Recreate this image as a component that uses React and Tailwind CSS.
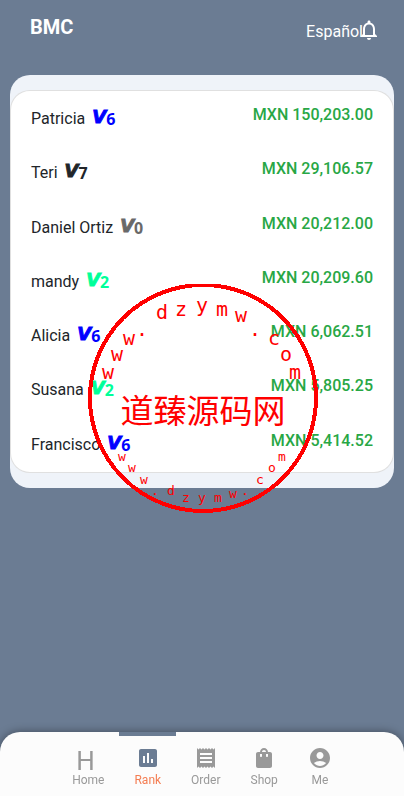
import React from "react";
import { MdNotificationsNone, MdPoll, MdReceipt, MdShoppingBag, MdAccountCircle } from "react-icons/md";

const rows = [
  { name: "Patricia", level: 6, color: "text-[#0000ff]", amount: "150,203.00" },
  { name: "Teri", level: 7, color: "text-[#212529]", amount: "29,106.57" },
  { name: "Daniel Ortiz", level: 0, color: "text-[#696969]", amount: "20,212.00" },
  { name: "mandy", level: 2, color: "text-[#00ff99]", amount: "20,209.60" },
  { name: "Alicia", level: 6, color: "text-[#0000ff]", amount: "6,062.51" },
  { name: "Susana", level: 2, color: "text-[#00ff99]", amount: "5,805.25" },
  { name: "Francisco", level: 6, color: "text-[#0000ff]", amount: "5,414.52" },
];

const tabs = [
  { label: "Home" },
  { label: "Rank", icon: MdPoll, active: true },
  { label: "Order", icon: MdReceipt },
  { label: "Shop", icon: MdShoppingBag },
  { label: "Me", icon: MdAccountCircle },
];

// [char, x, baseline] on a 230 x 230 stamp
const upperArc = [
  ["w", 20, 95], ["w", 29, 77], ["w", 41, 61], [".", 54, 52], ["d", 74, 35], ["z", 93, 32], ["y", 114, 28],
  ["m", 134, 32], ["w", 153, 38], [".", 167, 52], ["c", 186, 61], ["o", 198, 77], ["m", 207, 95],
];
const lowerArc = [
  ["w", 34, 177], ["w", 44, 188], ["w", 56, 200], [".", 67, 211], ["d", 83, 211], ["z", 98, 218], ["y", 114, 218],
  ["m", 130, 218], ["w", 145, 214], [".", 157, 211], ["c", 172, 200], ["o", 184, 188], ["m", 194, 177],
];

const Stamp = () => {
  return (
    <svg
      className="pointer-events-none absolute left-1/2 top-[284px] ml-px -translate-x-1/2 font-['DejaVu_Sans_Mono',monospace]"
      width="230"
      height="230"
      viewBox="0 0 230 230"
      fill="#ff0000"
      textAnchor="middle"
    >
      <circle cx="115" cy="114" r="113" fill="none" stroke="#ff0000" strokeWidth="4" shapeRendering="crispEdges" />
      {upperArc.map(([char, x, y]) => (
        <text key={x} x={x} y={y} fontSize="20">{char}</text>
      ))}
      <text x="115" y="139" fontSize="33" className="font-['Noto_Sans_CJK_SC',sans-serif]">道臻源码网</text>
      {lowerArc.map(([char, x, y]) => (
        <text key={x} x={x} y={y} fontSize="13">{char}</text>
      ))}
    </svg>
  );
};

const Level = ({ value, color }) => {
  return (
    <span className={`ml-[7px] flex items-start font-bold ${color}`}>
      <span className="font-['DejaVu_Sans',sans-serif] text-lg leading-5 italic [-webkit-text-stroke:1px]">V</span>
      <span className="font-['Noto_Sans',sans-serif] leading-6">{value}</span>
    </span>
  );
};

const App = () => {
  return (
    <div className="relative flex min-h-screen flex-col bg-[#6b7c93] font-[Roboto,sans-serif] text-base text-[#212529]">
      <header className="flex items-start justify-between pl-[30px] pr-[23px] pt-[15px] text-white">
        <h1 className="text-xl font-bold leading-6">BMC</h1>
        <div className="flex pt-[3px]">
          <a href="#language" className="-mr-[6px] pt-0.5 leading-6">Español</a>
          <button type="button" aria-label="Notifications" className="h-6">
            <MdNotificationsNone size={24} />
          </button>
        </div>
      </header>

      <main className="mx-[10px] mt-[31px] mb-20 rounded-[20px] bg-[#eff3f9] py-[15px]">
        <ul className="grid min-h-[383px] auto-rows-fr rounded-[20px] border border-black/12 bg-white px-5 pb-px">
          {rows.map((row) => (
            <li key={row.name} className="flex items-start justify-between">
              <div className="flex pt-4 leading-6">
                <span>{row.name}</span>
                <Level value={row.level} color={row.color} />
              </div>
              <span className="pt-3 font-medium leading-6 text-[#28a745]">MXN {row.amount}</span>
            </li>
          ))}
        </ul>
      </main>

      <nav className="fixed inset-x-0 bottom-0 flex h-16 justify-center rounded-t-[20px] bg-[#fcfcfc] shadow-[0_0_10px_rgba(0,0,0,0.4)]">
        {tabs.map(({ label, icon: Icon, active }) => (
          <a
            key={label}
            href={`#${label.toLowerCase()}`}
            className={`flex flex-col items-center border-t-4 px-[15px] pt-[10px] text-xs ${
              active ? "border-[#6b7c93] text-[#f47d52]" : "border-transparent text-[#999999]"
            }`}
          >
            {Icon ? (
              <Icon size={24} className={active ? "text-[#6b7c93]" : ""} />
            ) : (
              <span className="h-6 w-6 pt-[3px] text-[26px] leading-6">H</span>
            )}
            <span className="mt-0.5 leading-4">{label}</span>
          </a>
        ))}
      </nav>

      <Stamp />
    </div>
  );
};

export default App;
